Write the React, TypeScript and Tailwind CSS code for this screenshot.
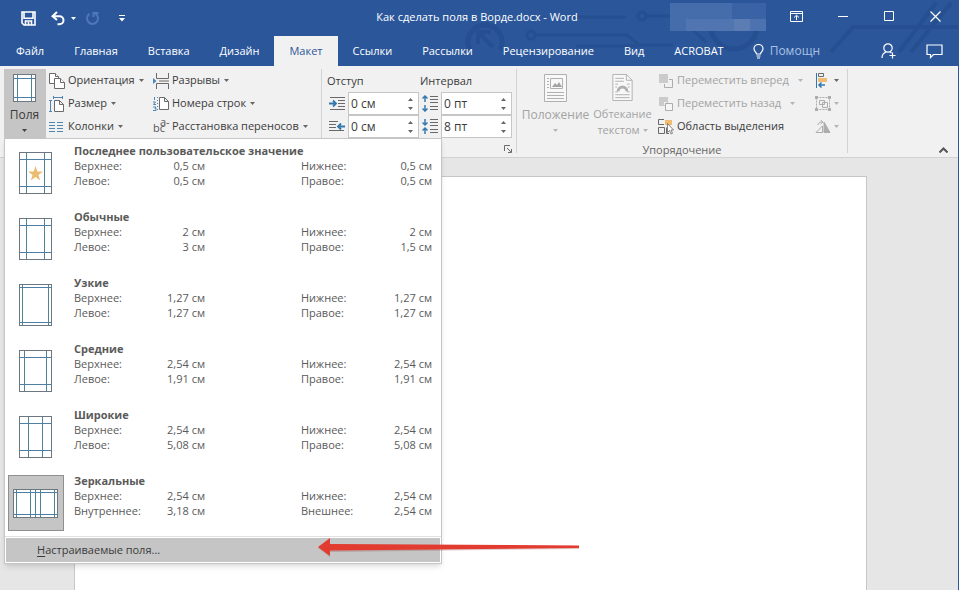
import React from "react";
import clsx from "clsx";

const TABS = ["Файл", "Главная", "Вставка", "Дизайн", "Макет", "Ссылки", "Рассылки", "Рецензирование", "Вид", "ACROBAT"];

type Preset = {
  title: string;
  // vertical and horizontal guide positions on the 33x42 sheet
  v: number[];
  h: number[];
  star?: boolean;
  mirrored?: boolean;
  rows: [string, string, string, string][];
};

const PRESETS: Preset[] = [
  {
    title: "Последнее пользовательское значение",
    v: [7, 25],
    h: [7, 34],
    star: true,
    rows: [
      ["Верхнее:", "0,5 см", "Нижнее:", "0,5 см"],
      ["Левое:", "0,5 см", "Правое:", "0,5 см"],
    ],
  },
  {
    title: "Обычные",
    v: [7, 25],
    h: [7, 34],
    rows: [
      ["Верхнее:", "2 см", "Нижнее:", "2 см"],
      ["Левое:", "3 см", "Правое:", "1,5 см"],
    ],
  },
  {
    title: "Узкие",
    v: [3, 29],
    h: [3, 38],
    rows: [
      ["Верхнее:", "1,27 см", "Нижнее:", "1,27 см"],
      ["Левое:", "1,27 см", "Правое:", "1,27 см"],
    ],
  },
  {
    title: "Средние",
    v: [5, 27],
    h: [7, 34],
    rows: [
      ["Верхнее:", "2,54 см", "Нижнее:", "2,54 см"],
      ["Левое:", "1,91 см", "Правое:", "1,91 см"],
    ],
  },
  {
    title: "Широкие",
    v: [9, 23],
    h: [7, 34],
    rows: [
      ["Верхнее:", "2,54 см", "Нижнее:", "2,54 см"],
      ["Левое:", "5,08 см", "Правое:", "5,08 см"],
    ],
  },
  {
    title: "Зеркальные",
    v: [3, 17, 22, 27, 41],
    h: [3, 25],
    mirrored: true,
    rows: [
      ["Верхнее:", "2,54 см", "Нижнее:", "2,54 см"],
      ["Внутреннее:", "3,18 см", "Внешнее:", "2,54 см"],
    ],
  },
];

function Caret({ className = "text-[#666]" }: { className?: string }) {
  return (
    <svg className={clsx("shrink-0", className)} width="5" height="3" viewBox="0 0 5 3" aria-hidden="true">
      <path d="M0 0h5L2.5 3z" fill="currentColor" />
    </svg>
  );
}

function Sheet({ v, h, width, height }: { v: number[]; h: number[]; width: number; height: number }) {
  return (
    <svg width={width} height={height} viewBox={`0 0 ${width} ${height}`} fill="none" aria-hidden="true">
      <rect x="0.5" y="0.5" width={width - 1} height={height - 1} fill="#fff" />
      {v.map((x) => (
        <path key={x} d={`M${x + 0.5} 1V${height - 1}`} stroke="#4f8494" />
      ))}
      {h.map((y) => (
        <path key={y} d={`M1 ${y + 0.5}H${width - 1}`} stroke="#4d7fa5" />
      ))}
      <rect x="0.5" y="0.5" width={width - 1} height={height - 1} stroke="#6d7780" />
    </svg>
  );
}

function Circuit() {
  return (
    <svg className="absolute right-0 top-0" width="520" height="66" viewBox="439 0 520 66" fill="none" stroke="#254f90" strokeWidth="4" aria-hidden="true">
      <path d="M471 50a17 17 0 1 1 30 0" strokeWidth="5" />
      <path d="M494 47l-14-14M479 44V32h13" strokeWidth="4" />
      <path d="M567 17h60" strokeWidth="3" />
      <circle cx="532" cy="35" r="4" strokeWidth="3" />
      <path d="M536 35h92l12 10h34" strokeWidth="3" />
      <path d="M577 46h63" strokeWidth="3" />
      <circle cx="643" cy="16" r="4" strokeWidth="3" />
      <path d="M647 16h32l28 26" strokeWidth="3" />
      <path d="M712 24a23 23 0 0 0 46 4" strokeWidth="5" />
      <path d="M832 52l22-25h105M900 52l37-49M912 52l40-49" />
    </svg>
  );
}

function TitleBar() {
  return (
    <div className="relative flex h-9 items-center text-white">
      <div className="flex w-[290px] shrink-0 items-center pl-[21px]">
        <button aria-label="Сохранить" className="mr-[15px]">
          <svg width="15" height="15" viewBox="0 0 15 15" fill="none" stroke="#fff" strokeWidth="1.6">
            <path d="M1 1h13v13H3l-2-2zM3 1.5v5.7h9V1.5M4.5 14V10h6v4M7.5 11v3" />
          </svg>
        </button>
        <button aria-label="Отменить" className="mr-[6px]">
          <svg width="14" height="15" viewBox="0 0 14 15" fill="none" stroke="#fff" strokeWidth="2">
            <path d="M6 1L1.5 5.2L6 9M2 5.2h6.5a4 4 0 0 1 0 8H6.5" />
          </svg>
        </button>
        <Caret className="mr-[9px] text-white" />
        <button aria-label="Вернуть" className="mr-[19px]">
          <svg width="15" height="15" viewBox="0 0 15 15" fill="none" stroke="#5078b8" strokeWidth="2">
            <path d="M4.5 2.8a5.5 5.5 0 1 0 6 0M8.5 6V2h5" />
          </svg>
        </button>
        <button aria-label="Настройка панели быстрого доступа">
          <svg width="6" height="7" viewBox="0 0 6 7" fill="#fff">
            <path d="M0 0h6v1H0zM0 3h6L3 6.5z" />
          </svg>
        </button>
      </div>
      <h1 className="flex-1 pb-[2px] pr-1 text-center">Как сделать поля в Ворде.docx - Word</h1>
      <div className="flex w-[290px] shrink-0 items-center justify-end pb-1 pr-[17px]">
        <svg className="mr-6 shrink-0 self-start" width="96" height="29" viewBox="0 0 96 29" aria-hidden="true">
          <path fill="#456cab" d="M0 1h62v28H0z" />
          <path fill="#3a63a5" d="M62 1h34v28H62z" />
          <path fill="#5175b0" d="M16 17h48v12H16z" />
          <path fill="#5c7db4" d="M64 17h16v12H64z" />
          <path fill="#4c72b0" d="M80 17h16v12H80z" />
        </svg>
        <button aria-label="Параметры отображения ленты" className="mr-[35px]">
          <svg width="13" height="11" viewBox="0 0 13 11" fill="none" stroke="#fff">
            <path d="M.5 .5h12v10H.5zM.5 2.5h12M6.5 9V4.5M4 6.5l2.5-2.3L9 6.5" />
          </svg>
        </button>
        <button aria-label="Свернуть" className="mr-9">
          <svg width="10" height="10" viewBox="0 0 10 10" stroke="#fff"><path d="M0 5.5h10" /></svg>
        </button>
        <button aria-label="Развернуть" className="mr-9">
          <svg width="10" height="10" viewBox="0 0 10 10" fill="none" stroke="#fff"><path d="M.5 .5h9v9h-9z" /></svg>
        </button>
        <button aria-label="Закрыть">
          <svg width="11" height="11" viewBox="0 0 11 11" stroke="#fff" strokeWidth="1.2"><path d="M.5 .5l10 10M10.5 .5l-10 10" /></svg>
        </button>
      </div>
    </div>
  );
}

function TabStrip() {
  return (
    <nav className="relative flex h-[30px] items-stretch pl-px text-white">
      {TABS.map((tab) => (
        <button
          key={tab}
          className={clsx(
            "whitespace-nowrap px-[15px]",
            tab === "Макет" && "bg-[#f1f1f1] text-[#2b579a]"
          )}
        >
          {tab}
        </button>
      ))}
      <button className="flex items-center gap-[6px] pl-[14px] text-[12px] text-[#a9c0e4]">
        <svg width="11" height="15" viewBox="0 0 11 15" fill="none" stroke="#fff" strokeWidth="1.2" aria-hidden="true">
          <path d="M3.5 10C3.5 8 1 7.5 1 4.8a4.5 4.3 0 0 1 9 0C10 7.5 7.5 8 7.5 10zM3.5 12h4M4 14h3" />
        </svg>
        Помощн
      </button>
      <div className="ml-auto flex items-center gap-[30px] pr-[15px]">
        <button aria-label="Общий доступ">
          <svg width="15" height="16" viewBox="0 0 15 16" fill="none" stroke="#fff" strokeWidth="1.2">
            <circle cx="7" cy="5" r="4.2" />
            <path d="M1 15c0-3 1.5-5 4-6M9 9l1.5 1M11.5 9.5v6M8.5 12.5h6" />
          </svg>
        </button>
        <button aria-label="Примечания">
          <svg width="17" height="15" viewBox="0 0 17 15" fill="none" stroke="#fff" strokeWidth="1.2">
            <path d="M1 1h15v9.5H7.5L4.5 13.5v-3H1z" />
          </svg>
        </button>
      </div>
    </nav>
  );
}

function RibbonButton({
  icon,
  label,
  disabled,
  caret = true,
  wide,
}: {
  icon: React.ReactNode;
  label: string;
  disabled?: boolean;
  caret?: boolean;
  wide?: boolean;
}) {
  return (
    <button
      disabled={disabled}
      className={clsx("flex h-[23px] items-center whitespace-nowrap", disabled ? "text-[#a3a3a3]" : "text-[#3b3b3b]")}
    >
      <span className="mr-[3px] w-4 shrink-0">{icon}</span>
      {label}
      {caret && (
        <span className={wide ? "ml-[9px]" : "ml-1"}>
          <Caret className={disabled ? "text-[#b5b5b5]" : "text-[#666]"} />
        </span>
      )}
    </button>
  );
}

const orientationIcon = (
  <svg width="16" height="16" viewBox="0 0 16 16" fill="#fff" stroke="#6a6a6a">
    <path d="M.5 .5h6l3 3v7h-9z" />
    <path d="M6.5 .5v3h3" />
    <path d="M5.5 5.5h6l4 4v6h-10z" />
    <path d="M11.5 5.5v4h4" />
  </svg>
);
const sizeIcon = (
  <svg width="16" height="16" viewBox="0 0 16 16" fill="none" stroke="#4f86b4">
    <path d="M1.5 4v12M0 4.5h3M0 15.5h3M4 1.5h10M4.5 0v3M13.5 0v3" />
    <path d="M5.5 4.5h5l4 4v7h-9zM10.5 4.5v4h4" stroke="#6a6a6a" fill="#fff" />
  </svg>
);
const columnsIcon = (
  <svg width="14" height="12" viewBox="0 0 14 12" stroke="#4f86b4">
    <path d="M0 1.5h6M0 4.5h6M0 7.5h6M0 10.5h6M8 1.5h6M8 4.5h6M8 7.5h6M8 10.5h6" />
  </svg>
);
const breaksIcon = (
  <svg width="16" height="16" viewBox="0 0 16 16" fill="none" stroke="#6a6a6a">
    <path d="M3.5 0v5.5h12V0M3.5 16v-5.5h12V16M6 8h10" />
    <path d="M0 5v6l3.5-3z" fill="#4f86b4" stroke="none" />
  </svg>
);
const lineNumbersIcon = (
  <svg width="16" height="16" viewBox="0 0 16 16" fill="none" stroke="#6a6a6a">
    <path d="M6.5 1.5h5l4 4v8h-9zM11.5 1.5v4h4" fill="#fff" />
    <path d="M1.5 1v3M0 6h2.5L.5 8.5H3M0 11h3l-1 1.5h1v2H0" stroke="#4f86b4" />
    <path d="M4.5 1v14" stroke="#4f86b4" strokeDasharray="1 2" />
  </svg>
);
const hyphenIcon = (
  <span className="relative block h-4 leading-4 text-[#555]" aria-hidden="true">
    <span className="absolute left-0 top-px">bc</span>
    <span className="absolute -top-[5px] left-[7px]">a-</span>
  </span>
);
const forwardIcon = (
  <svg width="16" height="16" viewBox="0 0 16 16" fill="none">
    <path d="M1 1h9v9H1z" fill="#cbcbcb" />
    <path d="M11 6.5h3.5v8h-8V11" stroke="#adadad" />
  </svg>
);
const backwardIcon = (
  <svg width="16" height="16" viewBox="0 0 16 16" fill="none">
    <path d="M1 1h9v9H1z" fill="#cbcbcb" />
    <path d="M6 6h3v1H7v2H6z" fill="#f1f1f1" />
    <path d="M7.5 7.5h7v7h-7z" stroke="#adadad" fill="#f5f5f5" />
  </svg>
);
const selectionIcon = (
  <svg width="16" height="16" viewBox="0 0 16 16" fill="none" stroke="#6a6a6a">
    <path d="M6 .5H.5v5H6M.5 8.5h6v6h-6z" />
    <path d="M7 1h7v5H7z" fill="#f0bc72" stroke="none" />
    <path d="M8.5 8.5v6H11" />
    <path d="M9.5 4.5v9l2-2 1.500 3.500 1.500-.7-1.500-3.300h2.500z" fill="#fff" strokeWidth=".8" />
  </svg>
);

function IndentIcon({ kind }: { kind: "left" | "right" }) {
  return (
    <svg width="16" height="13" viewBox="0 0 16 13" fill="none" stroke="#6a6a6a" aria-hidden="true">
      {kind === "left" ? (
        <>
          <path d="M1 .5h15M9 3.5h7M9 6.5h7M9 9.5h7M1 12.5h15" />
          <path d="M0 6.5h7M4 3.5l3 3-3 3" stroke="#3478ad" strokeWidth="1.8" />
        </>
      ) : (
        <>
          <path d="M0 1.5h9M0 4.5h7M0 7.5h7M0 10.5h15" />
          <path d="M9 6.5h7M12 3.5l-3 3 3 3" stroke="#3478ad" strokeWidth="1.8" />
        </>
      )}
    </svg>
  );
}

function SpacingIcon({ kind }: { kind: "before" | "after" }) {
  return (
    <svg width="16" height="17" viewBox="0 0 16 17" fill="none" stroke="#6a6a6a" aria-hidden="true">
      <path d="M8 1.5h8M8 4.5h8M8 7.5h8M8 11.5h8M8 14.5h8" />
      <path
        d={
          kind === "before"
            ? "M3 7V1M.5 3.5L3 1l2.5 2.5M3 10v6M.5 13.5L3 16l2.5-2.5"
            : "M3 1v6M.5 4.5L3 7l2.5-2.5M3 16v-6M.5 12.5L3 10l2.5 2.5"
        }
        stroke="#3478ad"
        strokeWidth="1.5"
      />
    </svg>
  );
}

function Spinner({ label, value, icon }: { label: string; value: string; icon: React.ReactNode }) {
  return (
    <div className="flex h-[23px] items-center gap-[3px] pl-[2px]">
      {icon}
      <div className="flex h-[23px] w-[71px] items-center border border-[#c6c6c6] bg-white">
        <input aria-label={label} defaultValue={value} className="w-full min-w-0 bg-transparent pl-[2px] text-[12px] text-[#3b3b3b] outline-none" />
        <span className="flex flex-col gap-[6px] pr-[5px] text-[#666]">
          <button aria-label="Больше" className="block rotate-180">
            <Caret />
          </button>
          <button aria-label="Меньше" className="block">
            <Caret />
          </button>
        </span>
      </div>
    </div>
  );
}

function MarginsMenu() {
  return (
    <div className="absolute left-0 top-full z-10 w-[438px] border border-[#c6c6c6] bg-white pt-1 text-[#5a5a5a] shadow-md">
      <div className="flex flex-col gap-2 pb-[5px] pl-[3px] pr-[9px]">
        {PRESETS.map((p) => (
          <button key={p.title} className="flex h-[58px] gap-[10px] text-left leading-[15px]">
            <span
              className={clsx(
                "relative mt-[2px] flex size-14 shrink-0 items-center justify-center pr-px",
                p.mirrored && "border border-[#8f8f8f] bg-[#c5c5c5]"
              )}
            >
              <Sheet v={p.v} h={p.h} width={p.mirrored ? 45 : 33} height={p.mirrored ? 29 : 42} />
              {p.star && (
                <svg className="absolute" width="15" height="15" viewBox="0 0 15 15" aria-hidden="true">
                  <path d="M7.5 0l1.9 5.4H15l-4.5 3.5 1.7 5.6-4.7-3.4-4.7 3.4 1.7-5.6L0 5.4h5.6z" fill="#eabd72" />
                </svg>
              )}
            </span>
            <span className="block flex-1">
              <span className="block font-bold">{p.title}</span>
              {p.rows.map(([a, av, b, bv]) => (
                <span key={a} className="flex justify-between">
                  <span className="flex w-[131px] justify-between">
                    <span>{a}</span>
                    <span>{av}</span>
                  </span>
                  <span className="flex w-[131px] justify-between">
                    <span>{b}</span>
                    <span>{bv}</span>
                  </span>
                </span>
              ))}
            </span>
          </button>
        ))}
      </div>
      <div className="border-t border-[#e1e1e1] p-px">
        <button className="block h-6 w-full bg-[#c5c5c5] pl-[31px] text-left text-[#3b3b3b]">
          <u className="underline-offset-2">Н</u>астраиваемые поля...
        </button>
      </div>
      <svg className="absolute -right-[139px] bottom-[6px]" width="262" height="19" viewBox="0 0 262 19" aria-hidden="true">
        <path d="M0 10L12 1v5.5L261 8v3L12 14v5z" fill="#8a3b35" opacity=".25" />
        <path d="M0 9L12 0v6L261 7.5v2.5L12 12.5V18z" fill="#e23b30" />
      </svg>
    </div>
  );
}

function Ribbon() {
  return (
    <div className="relative z-10 flex h-[92px] border-b border-[#d2d2d2] bg-[#f1f1f1] pl-1 pt-[3px]">
      <section aria-label="Параметры страницы" className="flex w-[317px] shrink-0">
        <div className="relative h-[69px] w-[42px] shrink-0">
          <button className="flex h-full w-full flex-col items-center bg-[#c5c5c5] pr-px pt-[5px] text-[12px] text-[#3b3b3b]">
            <Sheet v={[4, 18]} h={[4, 23]} width={23} height={28} />
            <span className="mt-[5px] leading-4">Поля</span>
            <span className="mt-[6px]">
              <Caret className="text-[#444]" />
            </span>
          </button>
          <MarginsMenu />
        </div>
        <div className="ml-[3px] w-[104px]">
          <RibbonButton icon={orientationIcon} label="Ориентация" />
          <RibbonButton icon={sizeIcon} label="Размер" />
          <RibbonButton icon={columnsIcon} label="Колонки" />
        </div>
        <div>
          <RibbonButton icon={breaksIcon} label="Разрывы" />
          <RibbonButton icon={lineNumbersIcon} label="Номера строк" />
          <RibbonButton icon={hyphenIcon} label="Расстановка переносов" />
        </div>
      </section>

      <section aria-label="Абзац" className="relative mb-1 flex w-[196px] shrink-0 gap-px border-x border-[#d2d2d2] pl-[5px] text-[#3b3b3b]">
        <div>
          <h2 className="h-[23px] leading-[23px]">Отступ</h2>
          <Spinner label="Отступ слева" value="0 см" icon={<IndentIcon kind="left" />} />
          <Spinner label="Отступ справа" value="0 см" icon={<IndentIcon kind="right" />} />
        </div>
        <div>
          <h2 className="h-[23px] leading-[23px]">Интервал</h2>
          <Spinner label="Интервал до" value="0 пт" icon={<SpacingIcon kind="before" />} />
          <Spinner label="Интервал после" value="8 пт" icon={<SpacingIcon kind="after" />} />
        </div>
        <button aria-label="Параметры абзаца" className="absolute bottom-0 right-1">
          <svg width="8" height="8" viewBox="0 0 8 8" fill="none" stroke="#6a6a6a">
            <path d="M.5 6V.5H6M3 3l4 4M7.5 4v3.5H4" />
          </svg>
        </button>
      </section>

      <section aria-labelledby="arrange" className="mb-1 flex w-[331px] shrink-0 flex-col border-r border-[#d2d2d2]">
        <div className="flex h-[69px]">
          <button disabled className="ml-[5px] flex w-[67px] flex-col items-center pt-[5px] text-[12px] text-[#a3a3a3]">
            <svg width="23" height="28" viewBox="0 0 23 28" fill="none" stroke="#b0b0b0" aria-hidden="true">
              <path d="M.5 .5h22v27H.5z" fill="#f8f8f8" />
              <path d="M6.5 4.5h12v10h-12zM3 4.5h2M3 7.5h2M3 10.5h2M3 13.5h2M3 18.5h17M3 21.5h17M3 24.5h17" />
              <path d="M8 13l3-4 2 2 2-3 3 5z" fill="#a3a3a3" stroke="none" />
            </svg>
            <span className="mt-[5px] leading-4">Положение</span>
            <span className="mt-[6px]">
              <Caret className="text-[#b5b5b5]" />
            </span>
          </button>
          <button disabled className="flex w-[67px] flex-col items-center pt-[5px] text-[#a3a3a3]">
            <svg width="21" height="28" viewBox="0 0 21 28" fill="none" stroke="#b0b0b0" aria-hidden="true">
              <path d="M.5 .5h14l6 6v21H.5z" fill="#f8f8f8" />
              <path d="M14.5 .5v6h6M3 4.5h9M3 7.5h9M3 10.5h3M15 10.5h3M3 13.5h2M16 13.5h2M3 18.5h3M15 18.5h3M3 21.5h15M3 24.5h15" />
              <path d="M6 18a4.5 4.5 0 0 1 9 0" strokeWidth="3" />
            </svg>
            <span className="mt-[5px] leading-4">Обтекание</span>
            <span className="flex items-center gap-[3px] leading-4">
              текстом <Caret className="text-[#b5b5b5]" />
            </span>
          </button>
          <div className="ml-[2px] w-[157px]">
            <RibbonButton icon={forwardIcon} label="Переместить вперед" disabled wide />
            <RibbonButton icon={backwardIcon} label="Переместить назад" disabled wide />
            <RibbonButton icon={selectionIcon} label="Область выделения" caret={false} />
          </div>
          <div>
            <button aria-label="Выровнять" className="flex h-[23px] items-center gap-[3px]">
              <svg width="16" height="15" viewBox="0 0 16 15" fill="none" stroke="#6a6a6a">
                <path d="M1.5 0v15" stroke="#3478ad" />
                <path d="M3.5 .5h5v3h-5z" />
                <path d="M3 5h9v4H3z" fill="#f0bc72" stroke="none" />
                <path d="M4 12h6M6.5 9.5L4 12l2.5 2.5" stroke="#3478ad" strokeWidth="1.5" />
              </svg>
              <Caret />
            </button>
            <button aria-label="Группировать" disabled className="flex h-[23px] items-center gap-[3px]">
              <svg width="16" height="15" viewBox="0 0 16 15" fill="none" stroke="#adadad">
                <path d="M1.5 1.5h13v12h-13z" strokeDasharray="2 1" />
                <path d="M4.5 4.5h5v4h-5zM7.5 6.5h5v5h-5z" />
                <path d="M0 0h3v3H0zM13 0h3v3h-3zM0 12h3v3H0zM13 12h3v3h-3z" fill="#adadad" stroke="none" />
              </svg>
              <Caret className="text-[#b5b5b5]" />
            </button>
            <button aria-label="Повернуть" disabled className="flex h-[23px] items-center gap-[3px]">
              <svg width="16" height="13" viewBox="0 0 16 13" fill="none" stroke="#adadad">
                <path d="M9 2v10.5h6z" fill="#adadad" />
                <path d="M7.5 6v6.5H1zM3 5c0-2 1.5-3 4-3M5.5 0L8 2 5.5 4" />
              </svg>
              <Caret className="text-[#b5b5b5]" />
            </button>
          </div>
        </div>
        <h2 id="arrange" className="text-center leading-6 text-[#666]">Упорядочение</h2>
      </section>

      <button aria-label="Свернуть ленту" className="mb-1 ml-auto mr-[10px] self-end">
        <svg width="9" height="6" viewBox="0 0 9 6" fill="none" stroke="#555" strokeWidth="2">
          <path d="M.5 5.5l4-4 4 4" />
        </svg>
      </button>
    </div>
  );
}

export default function App() {
  return (
    <div className="flex min-h-screen flex-col border-r border-[#2b579a] bg-[#e6e6e6] font-['Open_Sans','Noto_Sans',sans-serif] text-[11px]">
      <header className="relative bg-[#2b579a]">
        <Circuit />
        <TitleBar />
        <TabStrip />
      </header>
      <Ribbon />
      <main className="flex flex-1 flex-col pl-[74px] pr-[91px] pt-[18px]">
        <article aria-label="Документ" className="flex-1 border border-b-0 border-[#c6c6c6] bg-white" />
      </main>
    </div>
  );
}
